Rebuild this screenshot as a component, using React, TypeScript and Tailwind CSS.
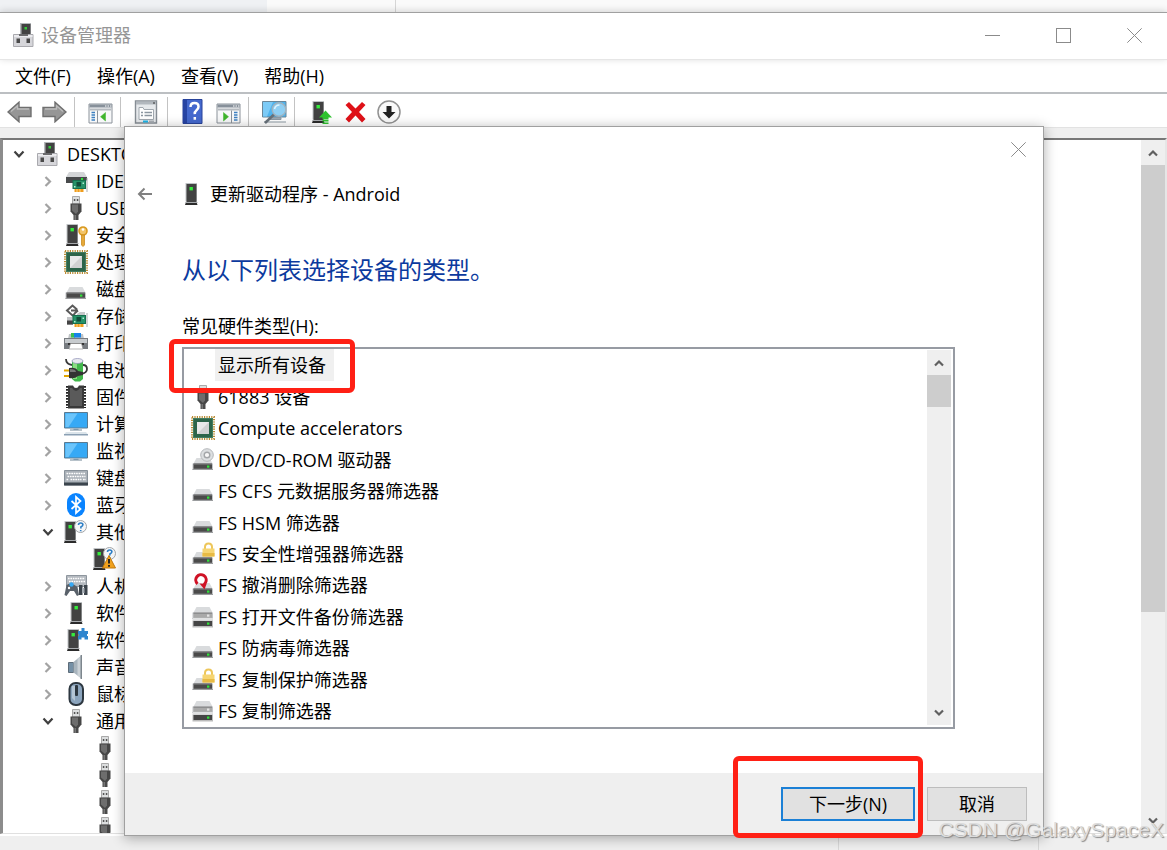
import type { ReactNode } from 'react';

const Svg = ({ children, size = 24 }: { children: ReactNode; size?: number }) => (
  <svg width={size} height={size} viewBox="0 0 24 24" fill="none" aria-hidden="true" className="shrink-0">
    {children}
  </svg>
);

const DriveShape = ({ y = 0, dark = '#4a4a4a', led = '#2fe23a' }: { y?: number; dark?: string; led?: string }) => (
  <g transform={`translate(0 ${y})`}>
    <path d="M5.500 10h13l3 5.500h-19z" fill="#d9dbdd" />
    <path d="M1.500 15.500h20.500v6.500h-20.500z" fill="#c3c5c8" />
    <path d="M2.500 15.500h18.500v5.300h-18.500z" fill={dark} />
    <path d="M2.500 15.500h18.500v1.500h-18.500z" fill="#7b7d7f" opacity=".6" />
    <path d="M1.500 21h20.500v1h-20.500z" fill="#9a9c9e" />
    <rect x="16" y="17.500" width="2.400" height="2.200" fill={led} />
  </g>
);

const TowerShape = ({ x = 0 }: { x?: number }) => (
  <g transform={`translate(${x} 0)`}>
    <path d="M6.500 1h11.500v18.500h-11.500z" fill="#c0c3c6" />
    <path d="M7.500 2h10v18h-10z" fill="#424242" />
    <path d="M7 20h10.500l1 3h-12.500z" fill="#2b2b2b" />
    <path d="M6.500 20h12v1h-12z" fill="#a8abae" />
    <rect x="10.500" y="5" width="3.400" height="3.400" fill="#35ec3c" />
  </g>
);

const Drive = () => (
  <Svg>
    <DriveShape />
  </Svg>
);
const Tower = () => (
  <Svg>
    <TowerShape />
  </Svg>
);
const Computer = () => (
  <Svg>
    <path d="M9 0h11v13h-11z" fill="#b5b8bb" />
    <path d="M10.500 1h9v12h-9z" fill="#424242" />
    <rect x="13.500" y="4" width="2.500" height="2.500" fill="#35c93c" />
    <path d="M2.500 11.500h19.500v12h-19.500z" fill="#d6d6da" stroke="#a9a9ae" />
    <path d="M3 12h18.500v2h-18.500z" fill="#ebebee" />
    <path d="M8 11h9v2h-9z" fill="#6a6a6c" />
    <rect x="5.500" y="15.500" width="3.500" height="4.500" fill="#4a4a4a" />
    <rect x="15.500" y="15.500" width="3.500" height="4.500" fill="#4a4a4a" />
  </Svg>
);
const BoardShape = () => (
  <g>
    <path d="M8.500 11h13.500v9h-13.500z" fill="#17704f" />
    <path d="M9.500 12h11.500v7h-11.500z" fill="#279268" />
    <path d="M12.500 13h4.500v4.500h-4.500z" fill="#124d39" />
    <path d="M18.500 13.500h1.500v1.500h-1.500zM10 17h1.500v1.500h-1.500z" fill="#b8f0d6" />
    <path d="M10.500 20h9v3h-9z" fill="#ef9c1c" />
    <path d="M13 20v3M16 20v3" stroke="#fbd58d" />
    <path d="M23 9v14" stroke="#a9acae" />
  </g>
);
const Ide = () => (
  <Svg>
    <path d="M5 3h15l3 5h-21z" fill="#d3d5d7" />
    <path d="M2 8h21v3.500h-13v2.500h-8z" fill="#484a4c" />
    <rect x="17" y="9" width="2" height="2" fill="#2fe23a" />
    <BoardShape />
  </Svg>
);
const Storage = () => (
  <Svg>
    <path d="M3 13h6v8h-6z" fill="#c1c3c5" />
    <path d="M3 16.500h6v4h-6z" fill="#444" />
    <path d="M13 10l3-2h5v3h-8z" fill="#c6c8ca" />
    <path d="M13 5.500 8.500 1.500 3 6.500l5.500 5 2.500-2M7 6.500h7M10.500 9.500l3.500-3" stroke="#5a5a5a" strokeWidth="2" />
    <BoardShape />
  </Svg>
);
const Usb = () => (
  <Svg>
    <path d="M8.500.500h7v7.500h-7z" fill="#dcdedf" stroke="#a9a9a9" />
    <rect x="9.800" y="3" width="1.500" height="2" fill="#555" />
    <rect x="12.800" y="3" width="1.500" height="2" fill="#555" />
    <path d="M6.500 7.500h11v8l-3 3.500h-5l-3-3.500z" fill="#464646" />
    <path d="M8 8.500h6v7l-2 2.500-4-3.500z" fill="#6d6d6d" />
    <path d="M9.500 19h5v5h-5z" fill="#4a4a4a" />
    <path d="M10.500 19h1.500v5h-1.500z" fill="#777" />
  </Svg>
);
const Security = () => (
  <Svg>
    <TowerShape x={-4} />
    <circle cx="19" cy="8" r="4" fill="#f2c469" stroke="#d8981f" strokeWidth="1.600" />
    <path d="M17.500 12h3v10l-1.500 1.500-1.500-1.500z" fill="#e5a93a" stroke="#c98b1e" strokeWidth=".8" />
    <circle cx="19" cy="6.500" r="1.300" fill="#fff" />
  </Svg>
);
const Cpu = () => (
  <Svg>
    <rect x="1" y="1" width="22" height="22" stroke="#b98a32" strokeWidth="2" strokeDasharray="1.200 1.200" />
    <rect x="2" y="2" width="20" height="20" fill="#2d6449" />
    <rect x="2.500" y="2.500" width="19" height="19" stroke="#447d60" />
    <rect x="6" y="6" width="12" height="12" fill="#d2d2d2" />
    <path d="M6 18V6h12z" fill="#e9e9e9" />
  </Svg>
);
const Printer = () => (
  <Svg>
    <path d="M5 3h14l1 5h-16z" fill="#bfc3c6" />
    <path d="M7 2h4v4.500h-4z" fill="#39c152" />
    <path d="M10 2h7v4.500h-7z" fill="#1683e8" />
    <path d="M0 7h24v11h-24z" fill="#777b80" />
    <path d="M1 8h22v4h-22z" fill="#c7cbce" />
    <path d="M4 12h16v2h-16z" fill="#333" />
    <path d="M6.500 12.500h11l1.500 5.500h-14z" fill="#fff" stroke="#888" strokeWidth=".6" />
  </Svg>
);
const Battery = () => (
  <Svg>
    <path d="M8 3h11v18l-3 2.500h-5l-3-2.500z" fill="#41b84b" />
    <path d="M9 3h4v18h-4z" fill="#8bdc83" />
    <ellipse cx="13.500" cy="3" rx="5.500" ry="2.500" fill="#e6e8ee" stroke="#8c8eb4" strokeWidth=".7" />
    <path d="M2 1q0 5 6 6M17 16q6-1 6-5t-4-4" stroke="#383838" strokeWidth="1.800" />
    <path d="M0 12.500h6M0 18h6" stroke="#e3a600" strokeWidth="2" />
    <path d="M5 10q7-1 9 3l5 1v3l-5 1q-3 3-9 2z" fill="#333" />
    <path d="M6 11q6 0 6 3h-6z" fill="#777" />
  </Svg>
);
const Firmware = () => (
  <Svg>
    <path d="M3.500 1v22M20.500 1v22" stroke="#222" strokeWidth="3" strokeDasharray="1.800 1.200" />
    <path d="M4 .5h5q1 2.500 3 2.500t3-2.500h5v23h-16z" fill="#3a3a3a" />
    <path d="M6 3h2q2 3 4 3t4-3h2v18h-12z" fill="#5a5a5a" />
  </Svg>
);
const MonitorShape = ({ y = 0 }: { y?: number }) => (
  <g transform={`translate(0 ${y})`}>
    <path d="M.500.500h23v15.500h-23z" fill="#36a9f5" stroke="#5a7a90" />
    <path d="M1.500 1.500h12l-9 13.500h-3z" fill="#6cc5fb" />
    <path d="M9.500 16.500h5v1.500h-5z" fill="#91aabb" />
    <path d="M6 17.500h12v1h-12z" fill="#6f8594" />
  </g>
);
const Pc = () => (
  <Svg>
    <MonitorShape />
    <path d="M2 20h20l2 2.500h-24z" fill="#dbe4ea" />
    <path d="M0 22h24v1.500h-24z" fill="#8ba0b4" />
  </Svg>
);
const Display = () => (
  <Svg>
    <MonitorShape y={3} />
  </Svg>
);
const Keyboard = () => (
  <Svg>
    <path d="M.500 4.500h23v14.500h-23z" fill="#aab1b8" stroke="#89929b" />
    <path d="M2.500 7.500h19M3.500 10.500h18M2.500 13.500h2M6.500 13.500h11M19 13.500h3" stroke="#fff" strokeWidth="1.600" strokeDasharray="1.700 .7" />
    <path d="M0 16.500h24v3h-24z" fill="#3b444d" />
  </Svg>
);
const Bluetooth = () => (
  <Svg>
    <rect x="3" y="0" width="18" height="24" rx="9" fill="#0a84ff" />
    <path d="M7.500 8l9 8-4.500 4V4l4.500 4-9 8" stroke="#fff" strokeWidth="1.700" />
  </Svg>
);
const Unknown = ({ warn = false }: { warn?: boolean }) => (
  <Svg>
    <TowerShape x={-6} />
    <circle cx="16.500" cy="6.500" r="6" fill="#f6f7f8" stroke="#a2a5a8" />
    <path d="M14.500 5q0-2 2.200-2t2.200 1.800q0 1.200-2 2.200v1.500M16.700 10v1.200" stroke="#2e7fc6" strokeWidth="1.600" />
    {warn && (
      <g>
        <path d="M16 8.500l6.500 12.500h-13z" fill="#f2a21d" stroke="#c57c10" strokeLinejoin="round" />
        <path d="M16 12v4.500M16 18v1.800" stroke="#222" strokeWidth="1.900" />
      </g>
    )}
  </Svg>
);
const Hid = () => (
  <Svg>
    <path d="M2.500 1.500h20v11h-20z" fill="#b5bac0" stroke="#8e969e" />
    <path d="M4 4.500h17M5 7.500h16" stroke="#fff" strokeWidth="1.500" strokeDasharray="1.600 .8" />
    <path d="M2.500 11q4.500-3 8 0l3 2 1.500 8-2 1-3-5h-4l-3.500 5-2-1z" fill="#59616a" />
    <circle cx="7.500" cy="10.500" r="2.200" fill="#36a9f5" />
    <circle cx="5" cy="14" r="1.200" fill="#fff" />
    <path d="M15 11h3.500v10h-3.500zM20 11h3.500v10h-3.500z" fill="#3c444c" />
    <path d="M18 14h2.500v5h-2.500z" fill="#a6adb4" />
  </Svg>
);
const Plugin = () => (
  <Svg>
    <TowerShape x={-3} />
    <path d="M14 3h3.500V0h3v3H24v3h-1v2h1v3.500h-3.500V9.500h-3v2H14V8h1V6h-1z" fill="#2f86cf" />
  </Svg>
);
const Speaker = () => (
  <Svg>
    <path d="M4.500 7.500h5v10h-5z" fill="#7590a6" stroke="#5d6c79" />
    <path d="M9.500 7l8-6.500v23l-8-6z" fill="#a8b4bd" />
    <path d="M13.500 4l4-3.500v23l-4-3z" fill="#cbd2d7" />
    <path d="M16.500 0h1.500v24h-1.500z" fill="#7d868d" />
  </Svg>
);
const Mouse = () => (
  <Svg>
    <rect x="5.500" y="1" width="13.500" height="22" rx="6" fill="#8ba4bd" stroke="#2d3740" strokeWidth="2" />
    <path d="M8 4h3v15l-3-3z" fill="#b4c5d5" />
    <rect x="11" y="3" width="3" height="11" rx="1" fill="#2d3740" />
  </Svg>
);
const Dvd = () => (
  <Svg>
    <DriveShape />
    <circle cx="16" cy="7" r="6.300" fill="#dcdfe1" stroke="#b4b7ba" />
    <circle cx="16" cy="7" r="2.800" fill="#f8f8f8" stroke="#a3a6a9" strokeWidth="1.400" />
  </Svg>
);
const LockDrive = () => (
  <Svg>
    <DriveShape />
    <path d="M14 7V5q0-3.500 3.500-3.500T21 5v2" stroke="#edc65a" strokeWidth="2" />
    <rect x="11.500" y="6.500" width="12" height="8" fill="#f6d573" />
    <path d="M11.500 11h12v3.500h-12z" fill="#e8bb45" />
  </Svg>
);
const UndoDrive = () => (
  <Svg>
    <DriveShape />
    <path d="M6.500 10.800A5.200 5.200 0 1 1 14.500 9.500L13 12" stroke="#cf1226" strokeWidth="3" />
    <path d="M8.500 10.500l7 .5-2 5.500z" fill="#cf1226" />
  </Svg>
);
const DriveStack = () => (
  <Svg>
    <DriveShape y={-8} dark="#a9a9a9" led="#e4e4e4" />
    <path d="M1.500 13h20.500v2.500h-20.500z" fill="#e0e1e2" />
    <path d="M1.500 15.500h20.500v7h-20.500z" fill="#bbb" />
    <path d="M2.500 16h18.500v5h-18.500z" fill="#454545" />
    <rect x="16" y="17.500" width="2.400" height="2.200" fill="#2fe23a" />
  </Svg>
);

const BigArrow = ({ flip = false }: { flip?: boolean }) => (
  <svg width="25" height="22" viewBox="0 0 25 22" aria-hidden="true">
    <path
      d="M1 11 12 1.200V6.500H24V15.500H12V20.800Z"
      transform={flip ? 'translate(25 0) scale(-1 1)' : undefined}
      fill="#969696"
      stroke="#6f6f6f"
      strokeWidth="1.400"
    />
    <path d="M4 10.500 10.500 4.800V8H22" transform={flip ? 'translate(25 0) scale(-1 1)' : undefined} fill="none" stroke="#bcbcbc" strokeWidth="1.400" />
  </svg>
);
const PaneIcon = ({ flip = false }: { flip?: boolean }) => (
  <svg width="25" height="24" viewBox="0 0 25 24" aria-hidden="true">
    <path d="M1 4h23v19H1z" fill="#f7f8f9" stroke="#8b929a" />
    <path d="M1.500 4.500h22v3h-22z" fill="#87909a" />
    <path d="M17 6h1.500M19.500 6H21M22 6h1" stroke="#fff" />
    <path d="M2 8.500h21v2H2z" fill="#b5babf" />
    <g transform={flip ? 'translate(25 0) scale(-1 1)' : undefined}>
      <path d="M9.500 10.500V23" stroke="#8b929a" />
      <path d="M3.500 12.500H7M3.500 15H7M3.500 17.500H7M3.500 20H7" stroke="#3c7fc0" strokeWidth="1.400" />
      <path d="M17.500 12.500v8.500l-5-4.250z" fill="#3fb52c" stroke="#3fb52c" strokeWidth=".5" />
    </g>
  </svg>
);
const PropsIcon = () => (
  <Svg>
    <path d="M1.500 1h21v22h-21z" fill="#e6e9ec" stroke="#868d94" strokeWidth="1.400" />
    <path d="M2 1.500h20v3H2z" fill="#b2b8be" />
    <path d="M19 3h2" stroke="#333" />
    <path d="M5 7.500h4l1 2h9.500v10H5z" fill="#fff" stroke="#a1a8af" />
    <path d="M7 12.500h2M7 15.500h2M10.500 12.500H18M10.500 15.500H18" stroke="#8c96a0" strokeWidth="1.300" />
    <path d="M9 21.500h5" stroke="#1db5e8" strokeWidth="2" />
    <path d="M15 21.500h5" stroke="#a9afb5" strokeWidth="2" />
  </Svg>
);
const HelpIcon = () => (
  <svg width="21" height="25" viewBox="0 0 21 25" aria-hidden="true">
    <path d="M1 .5h19v24H1z" fill="#4468cd" stroke="#28439a" />
    <path d="M1 .5h4v24H1z" fill="#2744a3" />
    <path d="M8.500 8q0-4 4-4t4 3.700q0 2-2 3.500t-1.700 4M12.800 18v2.800" fill="none" stroke="#fff" strokeWidth="2.500" />
  </svg>
);
const ScanIcon = () => (
  <svg width="25" height="24" viewBox="0 0 25 24" aria-hidden="true">
    <path d="M.500 1.500h23.500v15.500h-23.500z" fill="#4fb4ee" stroke="#6b8799" />
    <path d="M1 2h10L5 16.500H1z" fill="#7ccbf7" />
    <path d="M7 17.500h12v2H7zM2 22h22" fill="#9ba9b3" stroke="#8d9aa4" />
    <path d="M3 23 12.500 14" stroke="#68727a" strokeWidth="2.500" />
    <circle cx="17" cy="9.500" r="6.800" fill="#8fcff3" stroke="#9fb3c0" strokeWidth="1.400" />
    <path d="M12.500 9q1-4 5-4" fill="none" stroke="#dff4ff" strokeWidth="1.500" />
  </svg>
);
const UpdateIcon = () => (
  <Svg>
    <TowerShape x={-4} />
    <path d="M15.500 10.500l6.500 7h-3.500v2h-6v-2h-3.500z" fill="#2fc32f" />
    <path d="M12.500 20.800h6M12.500 23.200h6" stroke="#2fc32f" strokeWidth="1.500" />
  </Svg>
);
const RemoveIcon = () => (
  <svg width="21" height="22" viewBox="0 0 21 22" aria-hidden="true">
    <path d="M4 1l6.500 6.500L17 1l3.500 3-6.500 7 6.500 7-3.500 3.500-6.500-7-6.500 7L.500 18 7 11 .500 4z" fill="#df1118" />
  </svg>
);
const DisableIcon = () => (
  <Svg>
    <circle cx="12" cy="12" r="11" fill="#fafafa" stroke="#929292" strokeWidth="1.500" />
    <path d="M9.500 6h5v6h4l-6.500 6.500-6.500-6.500h4z" fill="#222" />
  </Svg>
);
const CloseIcon = () => (
  <svg width="15" height="15" viewBox="0 0 15 15" aria-hidden="true">
    <path d="M.3.3l14.400 14.400M14.700.3.3 14.700" stroke="#8b8b8b" />
  </svg>
);

const Chevron = ({ open }: { open: boolean }) =>
  open ? (
    <svg width="12" height="12" viewBox="0 0 12 12" fill="none" aria-hidden="true">
      <path d="M1.500 3.500 6 8.300l4.500-4.800" stroke="#404040" strokeWidth="2.200" />
    </svg>
  ) : (
    <svg width="12" height="12" viewBox="0 0 12 12" fill="none" aria-hidden="true">
      <path d="M3.500 2 8 6.500l-4.500 4.500" stroke="#a3a3a3" strokeWidth="2.200" />
    </svg>
  );

type Node = { level: 0 | 1 | 2; label?: string; icon: ReactNode; open?: boolean };

const nodes: Node[] = [
  { level: 0, label: 'DESKTO', icon: <Computer />, open: true },
  { level: 1, label: 'IDE', icon: <Ide /> },
  { level: 1, label: 'USB', icon: <Usb /> },
  { level: 1, label: '安全', icon: <Security /> },
  { level: 1, label: '处理', icon: <Cpu /> },
  { level: 1, label: '磁盘', icon: <Drive /> },
  { level: 1, label: '存储', icon: <Storage /> },
  { level: 1, label: '打印', icon: <Printer /> },
  { level: 1, label: '电池', icon: <Battery /> },
  { level: 1, label: '固件', icon: <Firmware /> },
  { level: 1, label: '计算', icon: <Pc /> },
  { level: 1, label: '监视', icon: <Display /> },
  { level: 1, label: '键盘', icon: <Keyboard /> },
  { level: 1, label: '蓝牙', icon: <Bluetooth /> },
  { level: 1, label: '其他', icon: <Unknown />, open: true },
  { level: 2, icon: <Unknown warn /> },
  { level: 1, label: '人机', icon: <Hid /> },
  { level: 1, label: '软件', icon: <Tower /> },
  { level: 1, label: '软件', icon: <Plugin /> },
  { level: 1, label: '声音', icon: <Speaker /> },
  { level: 1, label: '鼠标', icon: <Mouse /> },
  { level: 1, label: '通用', icon: <Usb />, open: true },
  { level: 2, icon: <Usb /> },
  { level: 2, icon: <Usb /> },
  { level: 2, icon: <Usb /> },
  { level: 2, icon: <Usb /> },
];

const indent = { 0: 'pl-[2px]', 1: 'pl-[31px]', 2: 'pl-[60px]' };

const types: { label: string; icon?: ReactNode }[] = [
  { label: '显示所有设备' },
  { label: '61883 设备', icon: <Usb /> },
  { label: 'Compute accelerators', icon: <Cpu /> },
  { label: 'DVD/CD-ROM 驱动器', icon: <Dvd /> },
  { label: 'FS CFS 元数据服务器筛选器', icon: <Drive /> },
  { label: 'FS HSM 筛选器', icon: <Drive /> },
  { label: 'FS 安全性增强器筛选器', icon: <LockDrive /> },
  { label: 'FS 撤消删除筛选器', icon: <UndoDrive /> },
  { label: 'FS 打开文件备份筛选器', icon: <DriveStack /> },
  { label: 'FS 防病毒筛选器', icon: <Drive /> },
  { label: 'FS 复制保护筛选器', icon: <LockDrive /> },
  { label: 'FS 复制筛选器', icon: <DriveStack /> },
];

const ScrollArrow = ({ down = false }: { down?: boolean }) => (
  <button type="button" aria-label={down ? '向下滚动' : '向上滚动'} className="flex h-[25px] w-full shrink-0 items-center justify-center">
    <svg width="10" height="8" viewBox="0 0 10 8" fill="none" aria-hidden="true">
      <path d={down ? 'M1 1.500 5 5.500 9 1.500' : 'M1 6.500 5 2.500 9 6.500'} stroke="#606060" strokeWidth="2.200" />
    </svg>
  </button>
);

const Tool = ({ label, children }: { label: string; children: ReactNode }) => (
  <button type="button" aria-label={label} className="flex items-center justify-center">
    {children}
  </button>
);

const group = 'flex h-[30px] items-center border-r border-[#c3c3c3] pr-[7px]';

function Dialog() {
  return (
    <section
      role="dialog"
      aria-label="更新驱动程序"
      className="absolute top-[126px] right-[123px] bottom-[14px] left-[124px] flex flex-col border border-[#a0a0a0] bg-white shadow-[0_2px_12px_rgba(0,0,0,0.32)]"
    >
      <div className="flex h-11 shrink-0 items-center justify-end pr-[17px]">
        <button type="button" aria-label="关闭">
          <CloseIcon />
        </button>
      </div>
      <header className="flex h-[46px] shrink-0 items-center pl-3">
        <button type="button" aria-label="返回" className="mr-[26px]">
          <svg width="16" height="16" viewBox="0 0 16 16" fill="none" aria-hidden="true">
            <path d="M15 8H2M7.500 2.500 2 8l5.500 5.500" stroke="#808080" strokeWidth="2" />
          </svg>
        </button>
        <Tower />
        <h1 className="ml-[7px] text-lg leading-6">更新驱动程序 - Android</h1>
      </header>
      <div className="flex min-h-0 flex-1 flex-col pr-[88px] pb-11 pl-[57px]">
        <h2 className="mt-[35px] text-2xl leading-9 text-[#0c3a9e]">从以下列表选择设备的类型。</h2>
        <div id="type-label" className="mt-[26px] mb-[9px] text-lg leading-6">
          常见硬件类型(H):
        </div>
        <div className="relative flex min-h-0 flex-1 border-2 border-[#979ba3]">
          <ul role="listbox" aria-labelledby="type-label" className="flex min-w-0 flex-1 flex-col pl-[7px]">
            {types.map((t, i) => (
              <li key={t.label} role="option" aria-selected={i === 0} className="flex flex-1 items-center text-lg leading-6">
                <span className="flex w-6 shrink-0 justify-center">{t.icon}</span>
                <span className={i === 0 ? 'bg-[#f0f0f0] py-1 pr-2 pl-[3px]' : 'pl-[3px]'}>{t.label}</span>
              </li>
            ))}
          </ul>
          <div className="mr-0.5 mb-0.5 mt-px flex w-6 flex-col bg-[#efefef]">
            <ScrollArrow />
            <div className="h-8 bg-[#cdcdcd]" />
            <div className="flex-1" />
            <ScrollArrow down />
          </div>
          <div className="pointer-events-none absolute -top-[10px] -left-[15px] h-[54px] w-[186px] rounded-md border-[5px] border-[#ff2015]" />
        </div>
      </div>
      <footer className="relative flex h-[62px] shrink-0 items-center justify-end gap-3 bg-[#efefef] pr-4 text-lg leading-6">
        <button type="button" className="h-[34px] w-[134px] border-2 border-[#1b80d6] bg-[#e1e1e1]">
          下一步(N)
        </button>
        <button type="button" className="h-[34px] w-[100px] border border-[#bdbdbd] bg-[#e1e1e1]">
          取消
        </button>
        <div className="pointer-events-none absolute -top-[17px] right-[120px] h-[82px] w-[190px] rounded-md border-[5px] border-[#ff2015]" />
      </footer>
    </section>
  );
}

export default function App() {
  return (
    <div className="relative flex h-screen flex-col overflow-hidden bg-white font-['Open_Sans','Noto_Sans_CJK_SC',sans-serif] text-black">
      <div className="flex h-3 shrink-0 bg-[#fafafa]">
        <div className="w-[267px] bg-[#eff1f4]" />
        <div className="w-[129px] border-r border-[#d6d6d6]" />
      </div>
      <header className="flex h-12 shrink-0 items-center border-t border-b border-t-[#a0a0a0] border-b-[#e6e6e6] pr-[25px] pb-0.5 pl-[11px] shadow-[0_-1px_7px_rgba(0,0,0,0.16)]">
        <Computer />
        <span className="ml-1.5 flex-1 text-lg leading-6 text-[#969696]">设备管理器</span>
        <div className="flex items-center gap-14">
          <button type="button" aria-label="最小化" className="flex h-[15px] w-[15px] items-center">
            <span className="h-px w-full bg-[#8b8b8b]" />
          </button>
          <button type="button" aria-label="最大化" className="h-[15px] w-[15px] border border-[#8b8b8b]" />
          <button type="button" aria-label="关闭">
            <CloseIcon />
          </button>
        </div>
      </header>
      <nav className="flex h-[34px] shrink-0 items-center border-b-2 border-[#bcbfc2] pl-0.5 text-lg leading-6">
        {['文件(F)', '操作(A)', '查看(V)', '帮助(H)'].map((m) => (
          <button key={m} type="button" className="px-[13px]">
            {m}
          </button>
        ))}
      </nav>
      <div className="flex h-[33px] shrink-0 items-center pt-0.5">
        <div className={`${group} gap-2.5 pl-[7px]`}>
          <Tool label="后退"><BigArrow /></Tool>
          <Tool label="前进"><BigArrow flip /></Tool>
        </div>
        <div className={`${group} pl-[13px]`}>
          <Tool label="显示控制台树"><PaneIcon /></Tool>
        </div>
        <div className={`${group} pr-[9px] pl-[13px]`}>
          <Tool label="属性"><PropsIcon /></Tool>
        </div>
        <div className={`${group} gap-[13px] pl-[14px]`}>
          <Tool label="帮助"><HelpIcon /></Tool>
          <Tool label="显示操作窗格"><PaneIcon flip /></Tool>
        </div>
        <div className={`${group} pl-[13px]`}>
          <Tool label="扫描检测硬件改动"><ScanIcon /></Tool>
        </div>
        <div className="flex items-center gap-[11px] pl-[15px]">
          <Tool label="更新驱动程序"><UpdateIcon /></Tool>
          <Tool label="卸载设备"><RemoveIcon /></Tool>
          <Tool label="禁用设备"><DisableIcon /></Tool>
        </div>
      </div>
      <div className="h-[11px] shrink-0 border-t border-[#e2e2e2] bg-[#efefef]" />
      <main className="flex min-h-0 flex-1 border-t-2 border-r-2 border-b border-l-[3px] border-t-[#777] border-r-[#e6e6e6] border-b-[#e0e0e0] border-l-[#8c8c8c]">
        <ul role="tree" aria-label="设备" className="min-w-0 flex-1 overflow-hidden">
          {nodes.map((n, i) => (
            <li key={i} role="treeitem" className={`flex h-[27px] items-center text-lg leading-6 ${indent[n.level]}`}>
              <span className="flex w-7 shrink-0 justify-center">{n.level < 2 && <Chevron open={!!n.open} />}</span>
              <span className="mr-2 ml-0.5">{n.icon}</span>
              <span>{n.label}</span>
            </li>
          ))}
        </ul>
        <div className="flex w-6 shrink-0 flex-col bg-[#efefef]">
          <ScrollArrow />
          <div className="h-[64.5%] bg-[#cdcdcd]" />
          <div className="flex-1" />
          <ScrollArrow down />
        </div>
      </main>
      <div className="flex h-4 shrink-0 justify-end border-t-2 border-white bg-[#efefef] pr-32">
        <div className="w-[201px] border-r border-l border-[#d8d8d8]" />
      </div>
      <Dialog />
      <div className="absolute right-[3px] bottom-[6px] font-['Liberation_Sans',sans-serif] text-[21px] leading-7 text-[#dcdcdc] [text-shadow:1px_1px_1px_#8a8a8a]">
        CSDN @GalaxySpaceX
      </div>
    </div>
  );
}
